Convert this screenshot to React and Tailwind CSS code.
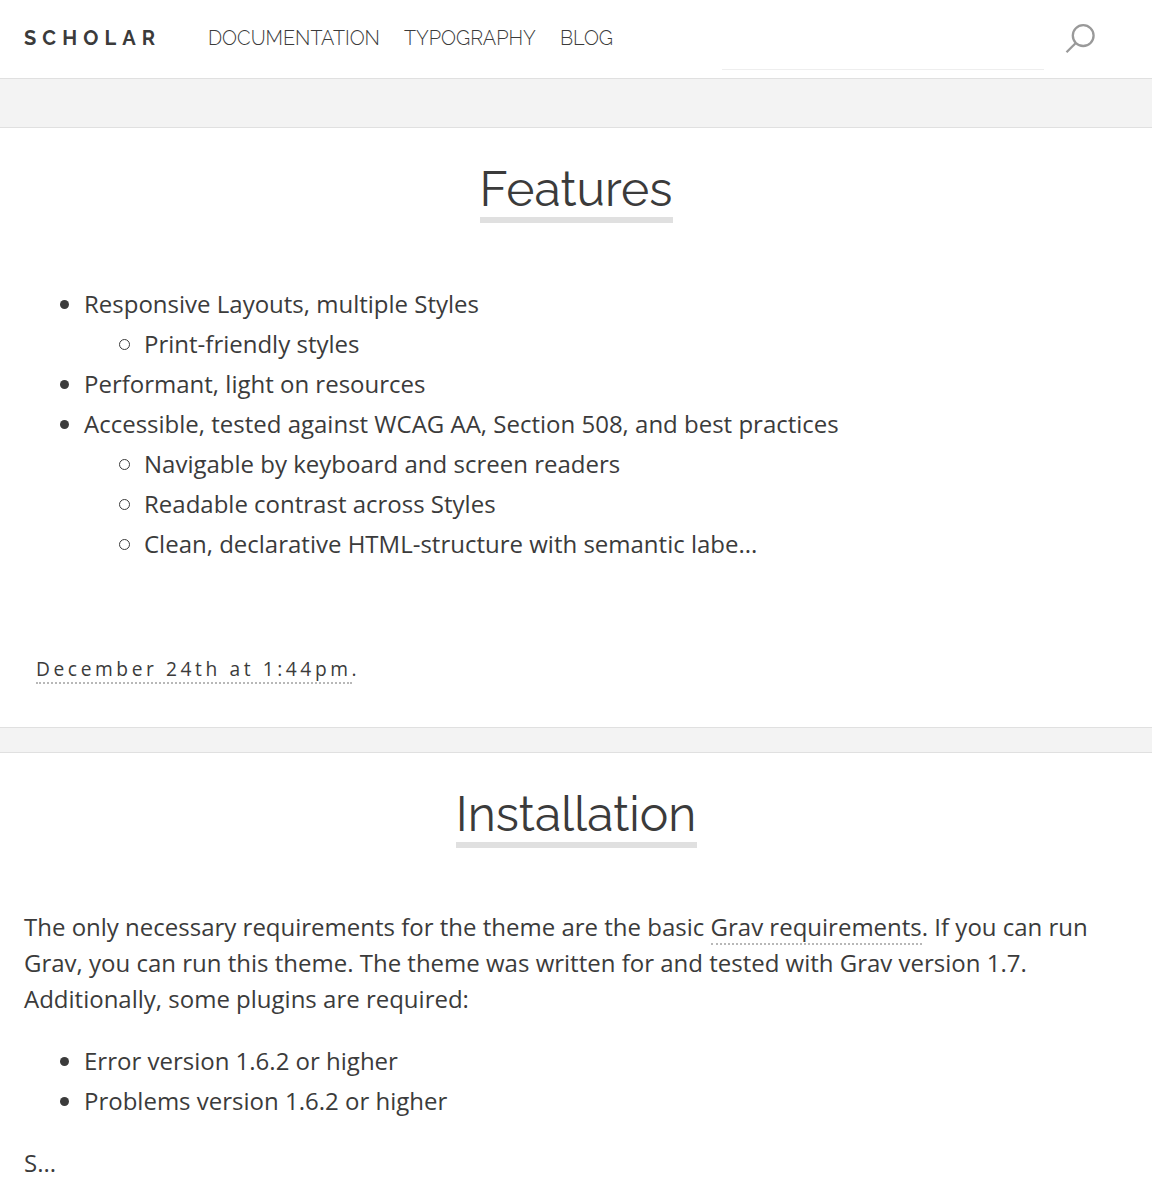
function Title({ children, width }) {
  return (
    <header className="flex justify-center">
      <h2
        className={`flex h-[62px] items-start justify-center whitespace-nowrap border-b-6 border-[#e0e0e0] font-['Raleway','Lato',sans-serif] text-[48px] leading-[56px] ${width}`}
      >
        {children}
      </h2>
    </header>
  );
}

function Item({ children, nested }) {
  return (
    <li className="flex h-10 items-center">
      {nested ? (
        <span className="ml-[59px] mr-[14px] size-[11px] rounded-full border border-[#3b3b3b]" />
      ) : (
        <span className="mr-[15px] size-[9px] rounded-full bg-[#3b3b3b]" />
      )}
      <span className="whitespace-nowrap">{children}</span>
    </li>
  );
}

export default function App() {
  return (
    <div className="h-[1200px] w-[1152px] overflow-hidden bg-[#f3f3f3] font-['Open_Sans',sans-serif] text-[24px] text-[#3b3b3b]">
      <header className="flex h-[79px] items-start border-b border-[#e0e0e0] bg-white pl-6 font-['Raleway','Lato',sans-serif] text-[20px] leading-[77px]">
        <a className="w-[184px] font-bold tracking-[6.1px]">SCHOLAR</a>
        <nav className="flex w-[514px] text-[19.8px] font-light">
          <a className="w-[196px]">DOCUMENTATION</a>
          <a className="w-[156px]">TYPOGRAPHY</a>
          <a>BLOG</a>
        </nav>
        <div className="h-[70px] w-[322px] border-b border-[#eeeeee]" />
        <svg className="ml-[20px] mt-[22px]" width="34" height="34" viewBox="0 0 34 34" fill="none" stroke="#999" strokeWidth="2.3">
          <circle cx="19.2" cy="13.6" r="10.4" />
          <path d="M11.8 21L2.5 30.2" />
        </svg>
      </header>
      <article className="mt-12 h-[601px] border-y border-[#e0e0e0] bg-white pt-[33px]">
        <Title width="w-[193px]">Features</Title>
        <ul className="ml-[60px] mt-[61px]">
          <Item>Responsive Layouts, multiple Styles</Item>
          <Item nested>Print-friendly styles</Item>
          <Item>Performant, light on resources</Item>
          <Item>Accessible, tested against WCAG AA, Section 508, and best practices</Item>
          <Item nested>Navigable by keyboard and screen readers</Item>
          <Item nested>Readable contrast across Styles</Item>
          <Item nested>Clean, declarative HTML-structure with semantic labe...</Item>
        </ul>
        <p className="ml-9 mt-[91px] text-[19.2px] leading-[28px] tracking-[3.58px]">
          <time className="border-b-2 border-dotted border-[#b8b8b8]">December 24th at 1:44pm</time>.
        </p>
      </article>
      <article className="mt-6 h-[500px] border-t border-[#e0e0e0] bg-white pt-[33px]">
        <Title width="w-[241px]">Installation</Title>
        <p className="ml-6 mt-[61px] whitespace-nowrap leading-9">
          The only necessary requirements for the theme are the basic{' '}
          <a className="border-b-2 border-dotted border-[#b8b8b8]">Grav requirements</a>. If you can run
          <br />
          Grav, you can run this theme. The theme was written for and tested with Grav version 1.7.
          <br />
          Additionally, some plugins are required:
        </p>
        <ul className="ml-[60px] mt-6">
          <Item>Error version 1.6.2 or higher</Item>
          <Item>Problems version 1.6.2 or higher</Item>
        </ul>
        <p className="ml-6 mt-6 leading-9">S...</p>
      </article>
    </div>
  );
}
